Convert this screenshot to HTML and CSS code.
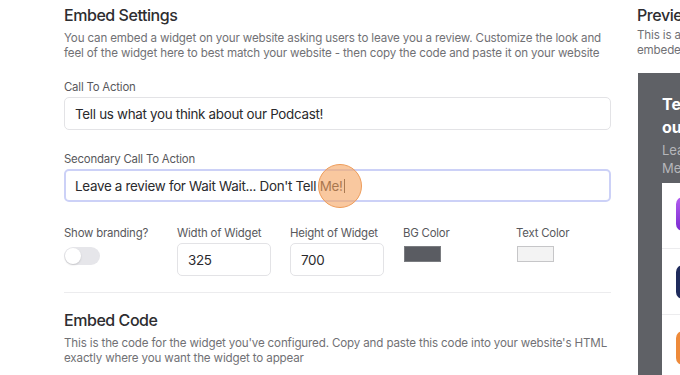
FILE: index.html
```html
<!DOCTYPE html>
<html>
<head>
<meta charset="utf-8">
<link rel="stylesheet" href="styles.css">
</head>
<body>
<div class="page">
  <main class="settings">
    <h1 class="title">Embed Settings</h1>
    <p class="desc">You can embed a widget on your website asking users to leave you a review. Customize the look and feel of the widget here to best match your website - then copy the code and paste it on your website</p>

    <label class="label first">Call To Action</label>
    <div class="input">Tell us what you think about our Podcast!</div>

    <label class="label">Secondary Call To Action</label>
    <div class="input focused">Leave a review for Wait Wait... Don't Tell Me!<span class="caret"></span>
      <span class="click"></span>
    </div>

    <div class="row">
      <div class="col">
        <label class="label small">Show branding?</label>
        <div class="toggle"><span class="knob"></span></div>
      </div>
      <div class="col">
        <label class="label small">Width of Widget</label>
        <div class="input num">325</div>
      </div>
      <div class="col">
        <label class="label small">Height of Widget</label>
        <div class="input num">700</div>
      </div>
      <div class="col">
        <label class="label small">BG Color</label>
        <div class="swatch dark"></div>
      </div>
      <div class="col">
        <label class="label small">Text Color</label>
        <div class="swatch light"></div>
      </div>
    </div>

    <hr class="divider">

    <h2 class="title">Embed Code</h2>
    <p class="desc">This is the code for the widget you've configured. Copy and paste this code into your website's HTML exactly where you want the widget to appear</p>
  </main>

  <aside class="preview">
    <h2 class="title">Preview</h2>
    <p class="desc">This is a preview of what the widget will look like when embeded on your website</p>
    <div class="widget">
      <div class="w-title">Tell us what you think about our Podcast!</div>
      <div class="w-sub">Leave a review for Wait Wait... Don't Tell Me!</div>
      <div class="w-card">
        <div class="w-item"><span class="app purple"></span><span class="app-name">Apple Podcasts</span></div>
        <div class="w-item"><span class="app navy"></span><span class="app-name">Podchaser</span></div>
        <div class="w-item"><span class="app orange"></span><span class="app-name">Castbox</span></div>
      </div>
    </div>
  </aside>
</div>
</body>
</html>
```
FILE: styles.css
```css
html, body {
  margin: 0;
  padding: 0;
  overflow: hidden;
  width: 680px;
  height: 375px;
  background: #fff;
}
body {
  font-family: "Inter", "Liberation Sans", sans-serif;
  color: #2c2c2e;
}
.page {
  display: flex;
  gap: 26px;
  padding: 4px 0 0 64px;
  width: 1200px;
}
.settings {
  width: 547px;
  flex: none;
  position: relative;
}
.title {
  margin: 0;
  font-size: 16px;
  font-weight: 500;
  line-height: 22px;
  color: #2d2d30;
  letter-spacing: -0.45px;
}
.desc {
  margin: 5px 0 0;
  font-size: 11.6px;
  line-height: 15px;
  color: #717175;
  letter-spacing: -0.15px;
}
.label {
  display: block;
  font-size: 11.4px;
  line-height: 15px;
  color: #58585c;
  margin: 22px 0 2px;
  letter-spacing: -0.2px;
}
.label.first { margin-top: 19px; }
.input {
  box-sizing: border-box;
  height: 33px;
  border: 1px solid #e3e3e6;
  border-radius: 5px;
  padding: 0 10px;
  display: flex;
  align-items: center;
  font-size: 13.4px;
  color: #2a2a2d;
  letter-spacing: -0.3px;
  position: relative;
}
.input.focused {
  border: 2px solid #ccd1f7;
  padding: 0 9px;
}
.caret {
  display: inline-block;
  width: 1px;
  height: 14px;
  background: #333;
  margin-left: 1px;
}
.click {
  position: absolute;
  left: 252px;
  top: -7px;
  width: 42px;
  height: 42px;
  border-radius: 50%;
  background: rgba(245, 166, 100, 0.62);
  border: 1.5px solid #ee9c5a;
}
.row {
  display: flex;
  margin-top: 24px;
}
.col {
  width: 113px;
  flex: none;
}
.label.small {
  margin: 0 0 2px;
}
.input.num {
  width: 94px;
  font-size: 13.4px;
}
.toggle {
  margin-top: 6px;
  width: 36px;
  height: 18px;
  border-radius: 9px;
  background: #e6e6ea;
  position: relative;
}
.knob {
  position: absolute;
  left: 1px;
  top: 1px;
  width: 16px;
  height: 16px;
  border-radius: 50%;
  background: #fff;
  box-shadow: 0 1px 2px rgba(0,0,0,0.15);
}
.swatch {
  margin-top: 5px;
  margin-left: 1px;
  width: 37px;
  height: 16px;
  box-sizing: border-box;
}
.swatch.dark {
  background: #5a5c62;
  border: 1px solid #7a7c80;
}
.swatch.light {
  background: #f3f3f3;
  border: 1px solid #c6c6c8;
}
.divider {
  border: none;
  border-top: 1px solid #ececee;
  margin: 16px 0 16px;
}
.preview {
  width: 330px;
  flex: none;
}
.preview .desc { margin-top: 2px; }
.widget {
  margin-top: 15px;
  margin-left: 1px;
  width: 325px;
  height: 320px;
  background: #5f6166;
  padding: 20px 0 0 24px;
  box-sizing: border-box;
}
.w-title {
  font-size: 16px;
  font-weight: 700;
  line-height: 23px;
  color: #fff;
  width: 245px;
}
.w-sub {
  font-size: 13px;
  line-height: 18px;
  color: #b5b6ba;
  width: 260px;
  margin-top: 2px;
}
.w-card {
  margin-top: 6px;
  background: #fff;
  width: 276px;
  height: 200px;
}
.w-item {
  display: flex;
  align-items: center;
  gap: 10px;
  height: 65px;
  padding-left: 14px;
  border-bottom: 1px solid #ececee;
}
.w-item:first-child { align-items: flex-start; padding-top: 14px; height: 51px; }
.app {
  width: 34px;
  height: 34px;
  border-radius: 7px;
  flex: none;
}
.app.purple { background: linear-gradient(180deg, #b45ef0, #7a2bd0); }
.app.navy { background: #1f2b5c; }
.app.orange { background: #ee8a3a; }
.app-name { font-size: 13px; color: #333; }
```
